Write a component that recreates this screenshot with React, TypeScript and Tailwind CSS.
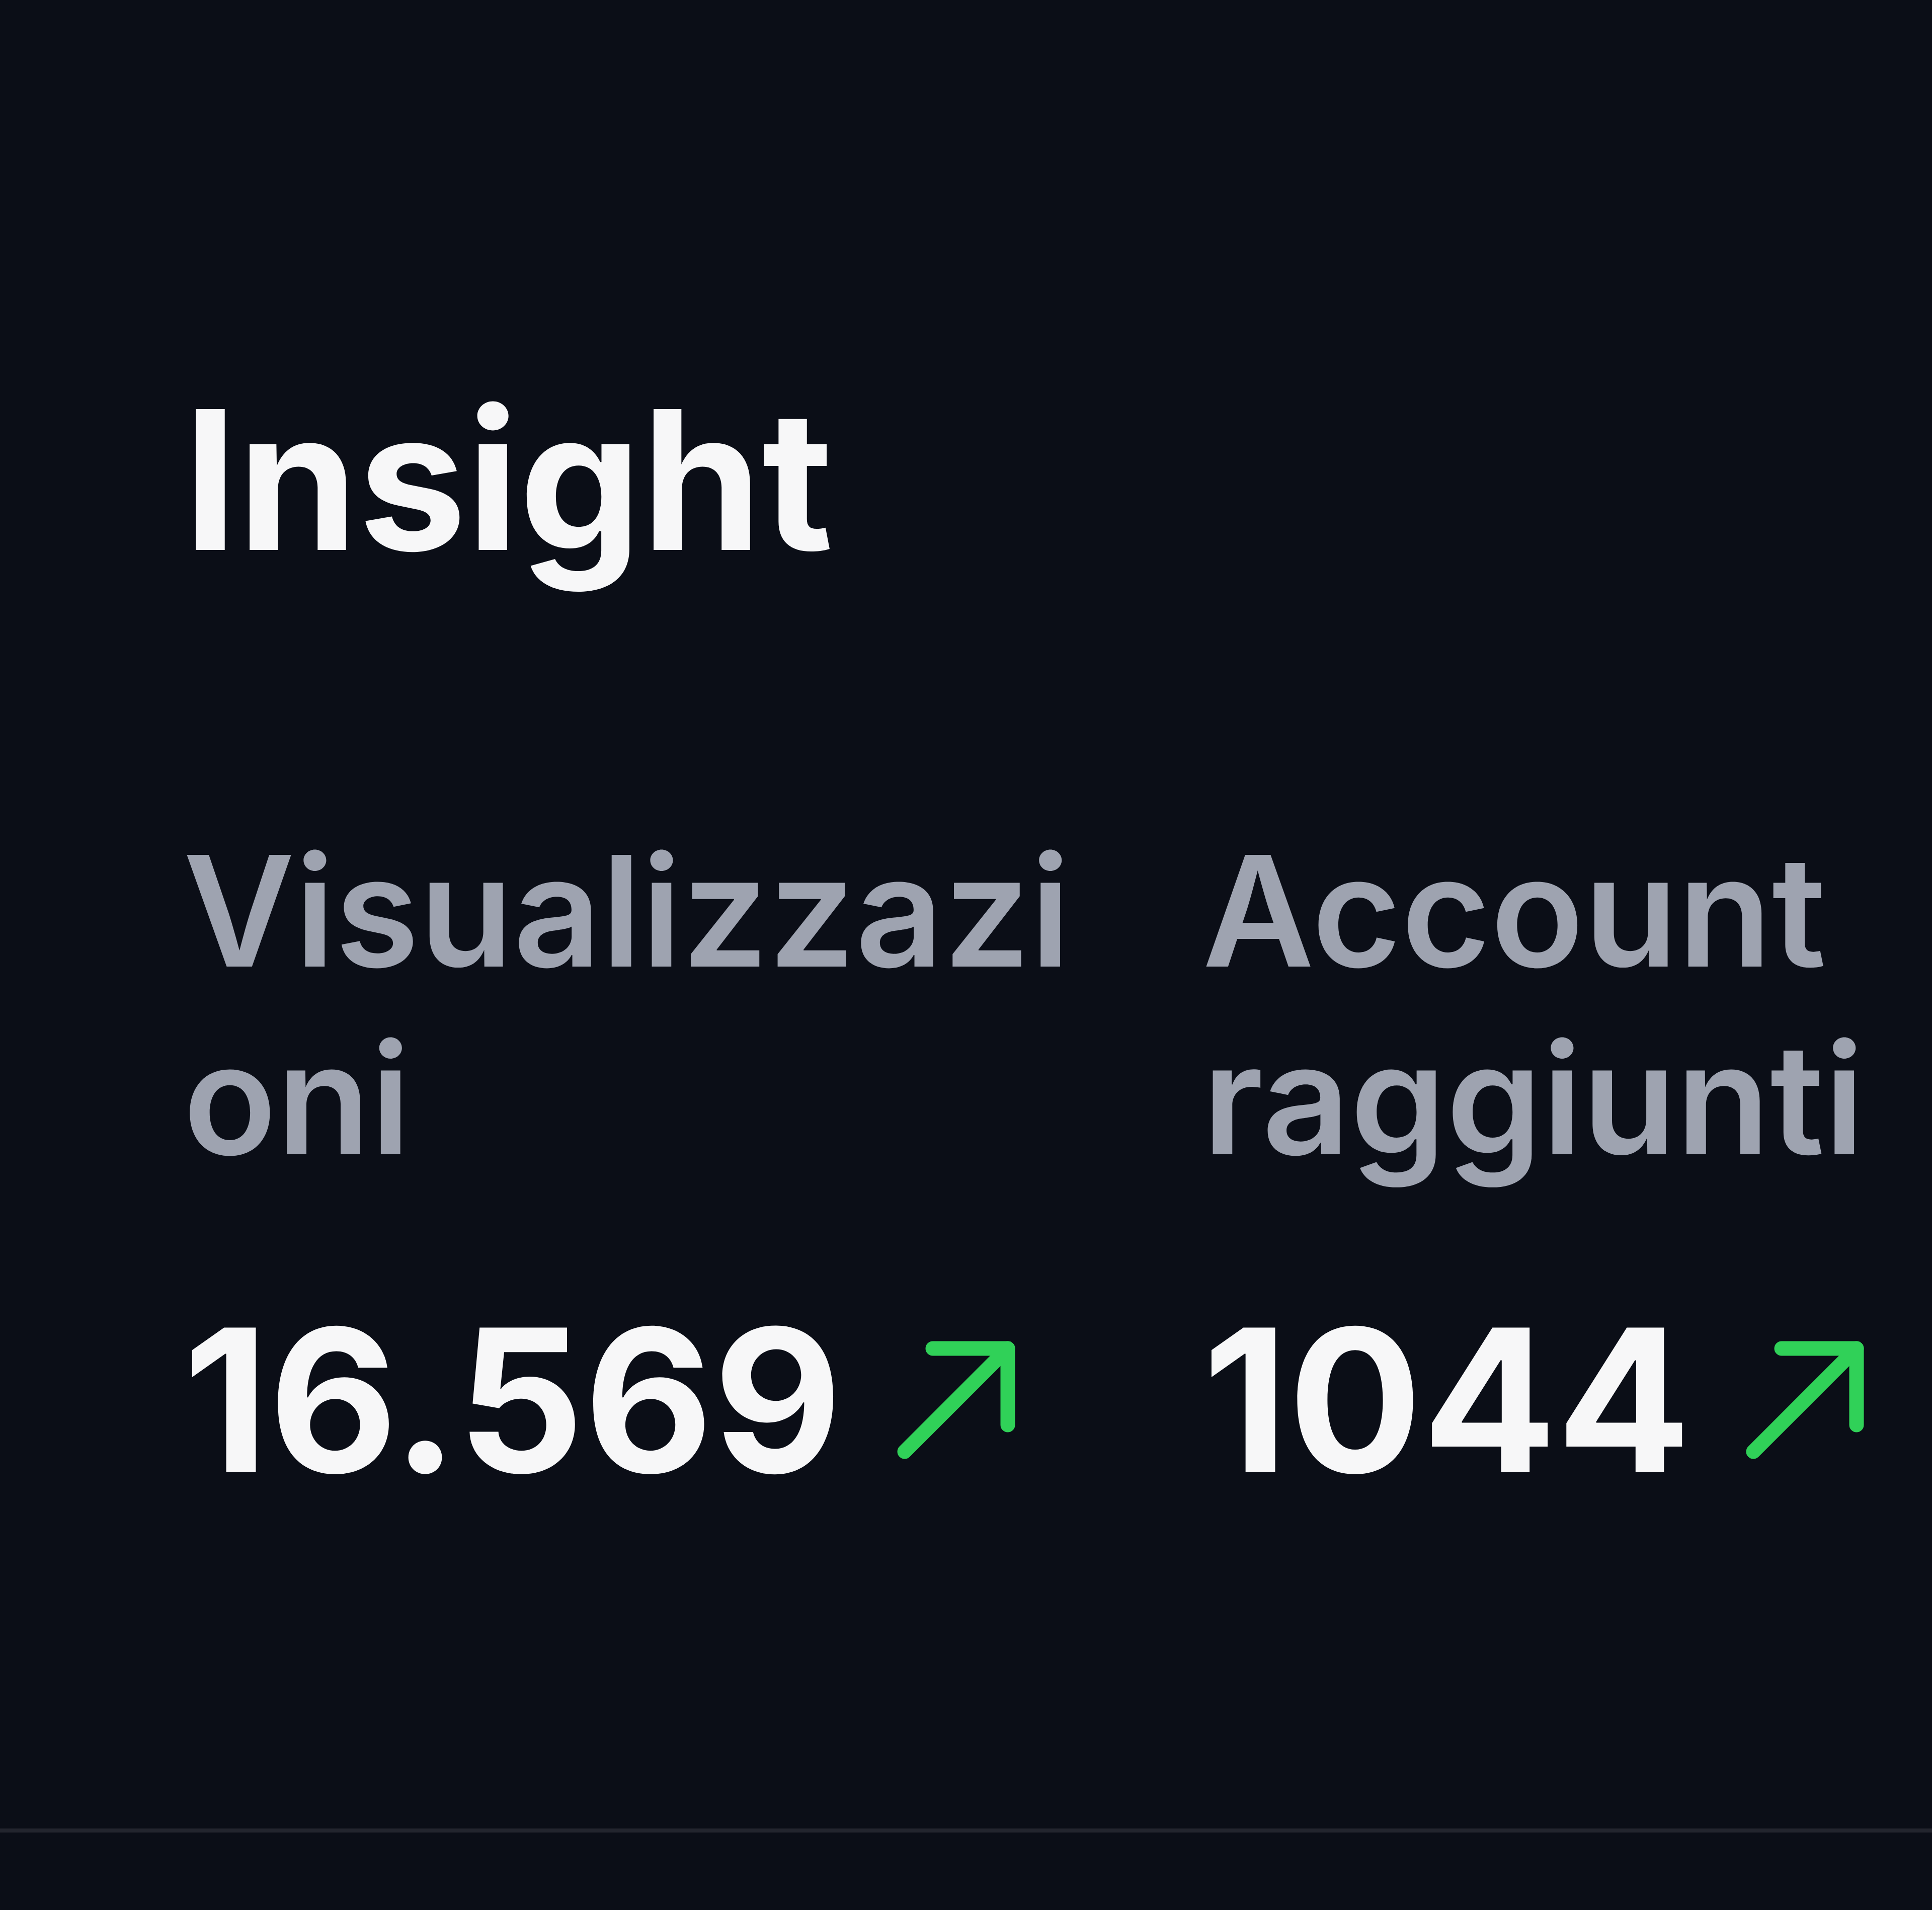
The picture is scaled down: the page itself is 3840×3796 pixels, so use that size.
import React from "react"

// green up-right trend arrow
const TrendUp = () => (
    <svg viewBox="0 0 245 245" className="w-[245px] h-[245px] shrink-0" fill="none"
        stroke="#30d158" strokeWidth={29} strokeLinecap="round" strokeLinejoin="round">
        <path d="M20 225 L225 20" />
        <path d="M76 20 H225 V172" />
    </svg>
)

const Stat = ({ label, value }: { label: string; value: string }) => (
    <div className="flex flex-col">
        <div className="text-[305px] leading-[373px] font-semibold text-[#9ea3b0] break-all">
            {label}
        </div>
        <div className="mt-[175px] flex items-center gap-[104px]">
            <div className="text-[395px] leading-[1.2] font-bold text-[#f7f7f8]">{value}</div>
            <TrendUp />
        </div>
    </div>
)

export default function App() {
    const stats = [
        { label: "Visualizzazioni", value: "16.569" },
        { label: "Account raggiunti", value: "1044" },
    ]

    return (
        <div className="min-h-screen w-full overflow-hidden bg-[#0b0e17] font-['Inter',sans-serif]">
            <section className="pl-[364px] pt-[722px] pb-[615px] border-b-[8px] border-[#23252e]">
                <h2 className="text-[385px] leading-[1.2] font-bold text-[#f7f7f8]">Insight</h2>
                <div className="mt-[440px] grid grid-cols-[1800px_1400px] gap-x-[226px]">
                    {stats.map((s) => (
                        <Stat key={s.label} label={s.label} value={s.value} />
                    ))}
                </div>
            </section>
        </div>
    )
}
